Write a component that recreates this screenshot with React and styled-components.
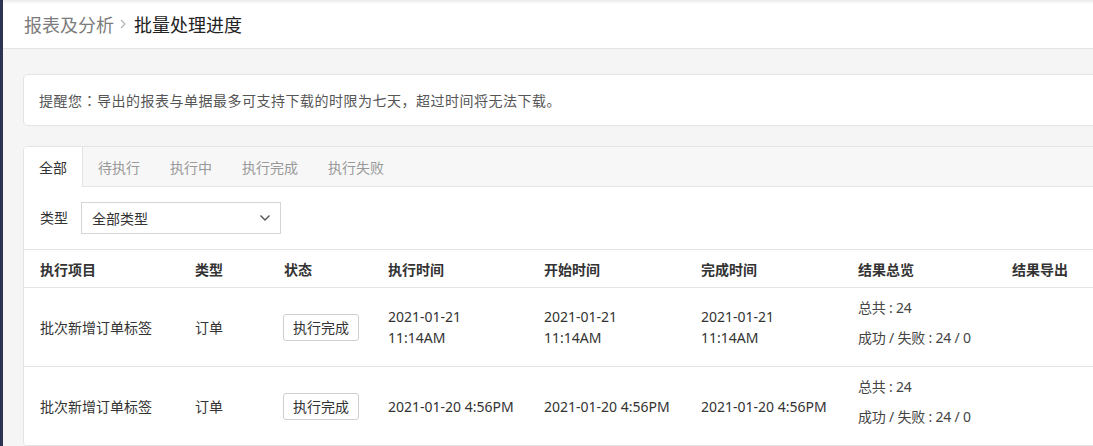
import React from "react";
import styled, { createGlobalStyle } from "styled-components";

const tabs = ["全部", "待执行", "执行中", "执行完成", "执行失败"];

const columns = [
  { label: "执行项目", width: "155px" },
  { label: "类型", width: "89px" },
  { label: "状态", width: "104px" },
  { label: "执行时间", width: "156px" },
  { label: "开始时间", width: "157px" },
  { label: "完成时间", width: "157px" },
  { label: "结果总览", width: "154px" },
  { label: "结果导出", width: "auto" },
];

const rows = [
  {
    name: "批次新增订单标签",
    type: "订单",
    status: "执行完成",
    run: "2021-01-21 11:14AM",
    start: "2021-01-21 11:14AM",
    end: "2021-01-21 11:14AM",
    total: 24,
    ok: 24,
    fail: 0,
  },
  {
    name: "批次新增订单标签",
    type: "订单",
    status: "执行完成",
    run: "2021-01-20 4:56PM",
    start: "2021-01-20 4:56PM",
    end: "2021-01-20 4:56PM",
    total: 24,
    ok: 24,
    fail: 0,
  },
];

const App = () => {
  return (
    <>
      <GlobalStyle />
      <Page>
        <SideStrip />
        <Content>
          <Header>
            <CrumbLink>报表及分析</CrumbLink>
            <CrumbArrow viewBox="0 0 6 10">
              <polyline points="1,1 5,5 1,9" />
            </CrumbArrow>
            <CrumbCurrent>批量处理进度</CrumbCurrent>
          </Header>
          <Main>
            <NoticeCard>
              提醒您：导出的报表与单据最多可支持下载的时限为七天，超过时间将无法下载。
            </NoticeCard>
            <TabCard>
              <TabBar>
                {tabs.map((t, i) => (
                  <Tab key={t} active={i === 0}>
                    {t}
                  </Tab>
                ))}
              </TabBar>
              <FilterRow>
                <FilterLabel>类型</FilterLabel>
                <SelectBox>
                  <span>全部类型</span>
                  <svg width="12" height="8" viewBox="0 0 12 8">
                    <polyline
                      points="1.5,1.5 6,6 10.5,1.5"
                      fill="none"
                      stroke="#555"
                      strokeWidth="1.4"
                    />
                  </svg>
                </SelectBox>
              </FilterRow>
              <Table>
                <colgroup>
                  {columns.map((c) => (
                    <col key={c.label} style={{ width: c.width }} />
                  ))}
                </colgroup>
                <thead>
                  <tr>
                    {columns.map((c) => (
                      <Th key={c.label}>{c.label}</Th>
                    ))}
                  </tr>
                </thead>
                <tbody>
                  {rows.map((r, i) => (
                    <tr key={i}>
                      <Td>{r.name}</Td>
                      <Td>{r.type}</Td>
                      <Td>
                        <StatusButton>{r.status}</StatusButton>
                      </Td>
                      <DateTd>{r.run}</DateTd>
                      <DateTd>{r.start}</DateTd>
                      <DateTd>{r.end}</DateTd>
                      <Td>
                        <ResultLine>总共 : {r.total}</ResultLine>
                        <ResultLine>
                          成功 / 失败 : {r.ok} / {r.fail}
                        </ResultLine>
                      </Td>
                      <Td />
                    </tr>
                  ))}
                </tbody>
              </Table>
            </TabCard>
          </Main>
        </Content>
      </Page>
    </>
  );
};

const GlobalStyle = createGlobalStyle`
  html, body {
    margin: 0;
    padding: 0;
    overflow: hidden;
    background: #f5f5f5;
    font-family: "Noto Sans", "Noto Sans CJK SC", sans-serif;
    color: #333;
  }
`;
const Page = styled.div`
  display: flex;
  min-height: 446px;
`;
const SideStrip = styled.div`
  width: 3px;
  flex-shrink: 0;
  background-color: #2c3451;
`;
const Content = styled.div`
  flex: 0 0 1130px;
  background: #f5f5f5;
`;
const Header = styled.header`
  display: flex;
  align-items: center;
  height: 48px;
  padding-left: 21px;
  background: #fff;
  border-bottom: 1px solid #e4e4e4;
  box-shadow: inset 0 4px 4px -3px rgba(0, 0, 0, 0.12);
`;
const CrumbLink = styled.span`
  font-size: 18px;
  color: #7b7b7b;
`;
const CrumbArrow = styled.svg`
  width: 6px;
  height: 10px;
  margin: 0 8px 0 6px;
  fill: none;
  stroke: #b0b0b0;
  stroke-width: 1.1;
`;
const CrumbCurrent = styled.span`
  font-size: 18px;
  color: #222;
`;
const Main = styled.main`
  display: flex;
  flex-direction: column;
  gap: 20px;
  padding: 25px 20px 0 20px;
`;
const NoticeCard = styled.section`
  display: flex;
  align-items: center;
  height: 50px;
  padding-left: 15px;
  background: #fff;
  border: 1px solid #e4e4e4;
  border-radius: 5px;
  font-family: "Noto Sans CJK JP", "Noto Sans CJK SC", sans-serif;
  font-size: 14px;
  letter-spacing: 0.5px;
  color: #555;
`;
const TabCard = styled.section`
  background: #fff;
  border: 1px solid #e4e4e4;
  border-radius: 5px;
  overflow: hidden;
`;
const TabBar = styled.nav`
  display: flex;
  height: 39px;
  background: #f7f7f7;
  border-bottom: 1px solid #e4e4e4;
`;
const Tab = styled.div`
  display: flex;
  align-items: center;
  padding: 0 15px;
  font-size: 14px;
  color: ${({ active }) => (active ? "#333" : "#999")};
  background: ${({ active }) => (active ? "#fff" : "transparent")};
  border-right: ${({ active }) => (active ? "1px solid #e4e4e4" : "none")};
  margin-bottom: ${({ active }) => (active ? "-1px" : "0")};
`;
const FilterRow = styled.div`
  display: flex;
  align-items: center;
  gap: 13px;
  padding: 15px 16px 15px 16px;
  border-bottom: 1px solid #e4e4e4;
`;
const FilterLabel = styled.span`
  font-size: 14px;
  color: #333;
  margin-top: -3px;
`;
const SelectBox = styled.div`
  display: flex;
  align-items: center;
  justify-content: space-between;
  box-sizing: border-box;
  width: 200px;
  height: 32px;
  padding: 0 9px 0 10px;
  border: 1px solid #d5d5d5;
  font-size: 14px;
  color: #333;
`;
const Table = styled.table`
  width: 100%;
  table-layout: fixed;
  border-collapse: collapse;
`;
const Th = styled.th`
  height: 37px;
  padding: 0 0 0 16px;
  text-align: left;
  font-size: 14px;
  font-weight: bold;
  color: #333;
  border-bottom: 1px solid #e4e4e4;
`;
const Td = styled.td`
  height: 78px;
  padding: 0 0 0 16px;
  font-size: 14px;
  color: #333;
  vertical-align: middle;
  border-bottom: 1px solid #e4e4e4;
`;
const DateTd = styled(Td)`
  padding-right: 12px;
  line-height: 21px;
`;
const StatusButton = styled.button`
  height: 27px;
  padding: 0 9px;
  margin-left: -1px;
  background: #fff;
  border: 1px solid #cfcfcf;
  border-radius: 3px;
  font-family: inherit;
  font-size: 14px;
  color: #333;
`;
const ResultLine = styled.div`
  font-size: 14px;
  letter-spacing: -0.2px;
  line-height: 22px;
  margin: 0 0 8px;
  color: #444;
`;

export default App;
